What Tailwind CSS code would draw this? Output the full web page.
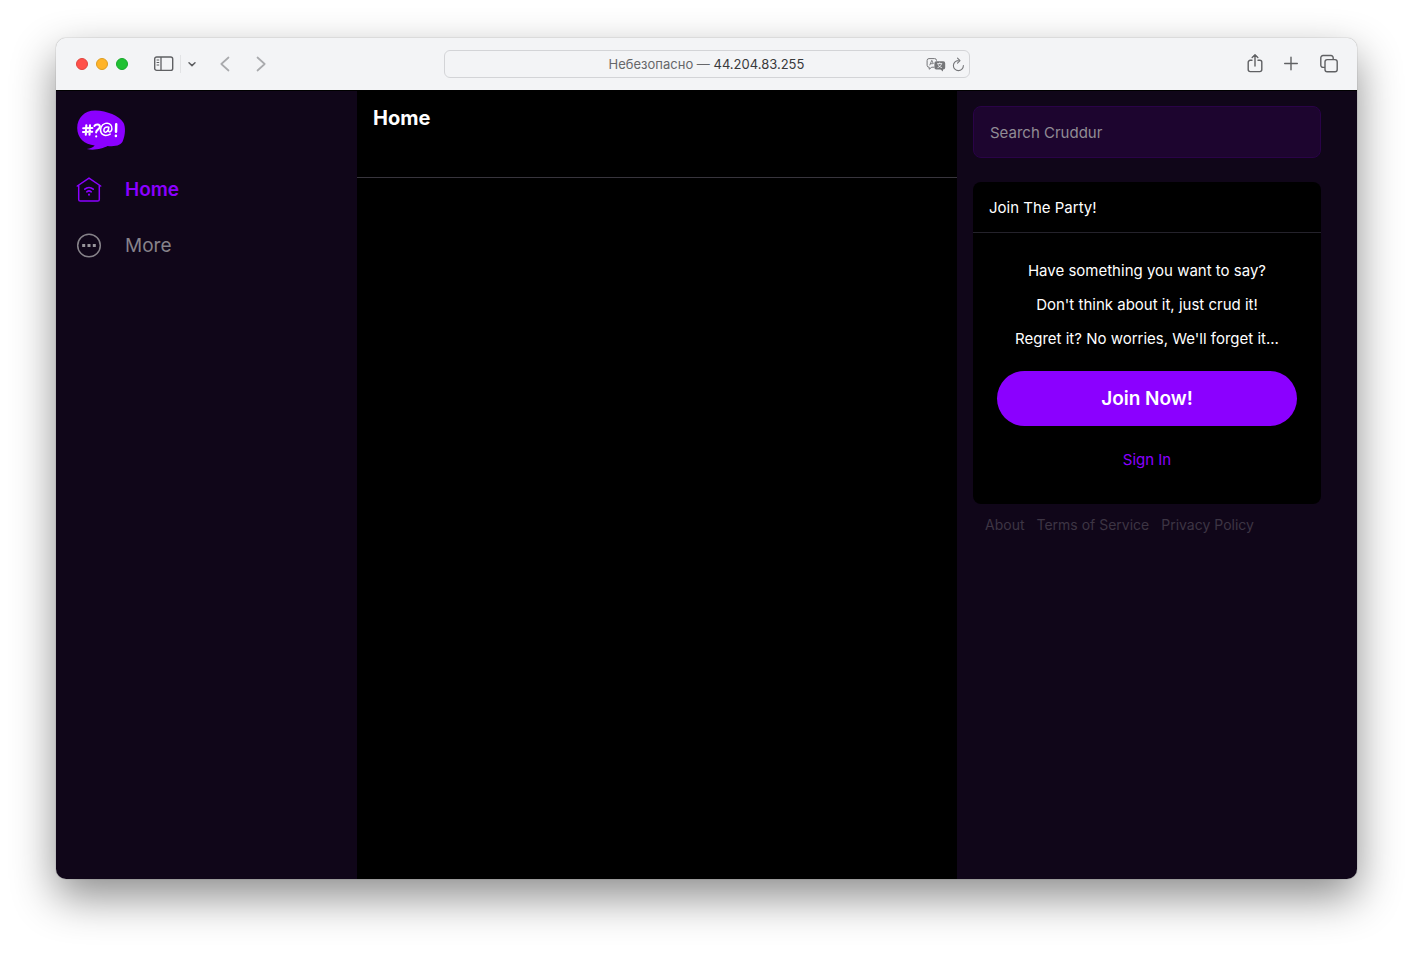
<!DOCTYPE html>
<html lang="en">
<head>
<meta charset="utf-8">
<title>Cruddur</title>
<script src="https://cdn.jsdelivr.net/npm/@tailwindcss/browser@4"></script>
</head>
<body class="bg-white font-['Inter','Liberation_Sans',sans-serif] text-white">
<div class="flex h-screen px-14 pt-[38px] pb-[74px]">
<div class="flex flex-1 flex-col overflow-hidden rounded-[10px] shadow-[0_18px_44px_rgba(0,0,0,0.45),0_0_1px_rgba(0,0,0,0.6)]">

  <header class="grid h-[52px] shrink-0 grid-cols-[1fr_526px_1fr] items-center bg-[#f3f4f6] text-[#5f6063]">
    <div class="flex items-center pl-5">
      <div class="flex gap-2">
        <button aria-label="Close" class="size-3 rounded-full border border-[#e0443e] bg-[#ff5049]"></button>
        <button aria-label="Minimize" class="size-3 rounded-full border border-[#dd9d20] bg-[#ffb429]"></button>
        <button aria-label="Zoom" class="size-3 rounded-full border border-[#17a82b] bg-[#20c133]"></button>
      </div>
      <button aria-label="Sidebar" class="ml-[25px]">
        <svg class="block" width="21" height="16" viewBox="0 0 21 16" fill="none" stroke="currentColor"><rect x="1.700" y="1" width="18" height="13.400" rx="2" stroke-width="1.4"/><path d="M8 1v13.400" stroke-width="1.3"/><path d="M3.600 4h2.600M3.600 6.500h2.600M3.600 9h2.600" stroke-width="1"/></svg>
      </button>
      <span class="ml-[6px] h-[18px] w-px bg-[#e2e3e5]"></span>
      <button aria-label="Tab groups" class="ml-[6px]">
        <svg class="block" width="10" height="8" viewBox="0 0 10 8" fill="none" stroke="currentColor" stroke-width="1.500" stroke-linecap="round" stroke-linejoin="round"><path d="M2 2.800 5 5.600l3-2.800"/></svg>
      </button>
      <button aria-label="Back" class="ml-[22px] text-[#a9aaad]">
        <svg class="block" width="12" height="16" viewBox="0 0 12 16" fill="none" stroke="currentColor" stroke-width="1.700" stroke-linecap="round" stroke-linejoin="round"><path d="M9.500 1.500 2.300 8l7.200 6.500"/></svg>
      </button>
      <button aria-label="Forward" class="ml-6 text-[#a9aaad]">
        <svg class="block" width="12" height="16" viewBox="0 0 12 16" fill="none" stroke="currentColor" stroke-width="1.700" stroke-linecap="round" stroke-linejoin="round"><path d="M2.500 1.500 9.700 8l-7.200 6.500"/></svg>
      </button>
    </div>

    <div class="relative flex h-7 items-center justify-center rounded-md border border-[#d3d4d7] pt-px text-[13px]">
      <span class="whitespace-pre text-[#66676a]">Небезопасно — <span class="text-[#38393b]">44.204.83.255</span></span>
      <div class="absolute right-1 flex items-center gap-1.5 text-[#757679]">
        <button aria-label="Translate">
          <svg class="block" width="20" height="16" viewBox="0 0 20 16" fill="none" stroke="currentColor"><path d="M8.300 10.200H5.800l-2.600 2v-2H3A1.900 1.900 0 0 1 1.100 8.300V3.500A1.900 1.900 0 0 1 3 1.600h5.600a1.900 1.900 0 0 1 1.900 1.900v.3"/><path d="m3.700 8.300 2.100-5 1.600 3.600M4.500 6.700h2.400" stroke-width=".9"/><path d="M10.300 4.300h7a1.900 1.900 0 0 1 1.900 1.900v4.400a1.900 1.900 0 0 1-1.900 1.900h-.3v2l-2.500-2h-4.200a1.900 1.900 0 0 1-1.900-1.900V6.200a1.900 1.900 0 0 1 1.900-1.900z" fill="currentColor" stroke="none"/><path d="M11.200 6.600h5M13.700 5.500v1M12 7.200c.6 1.600 2 2.800 3.800 3.400M15.400 7.200c-.6 1.600-2 2.800-3.800 3.400" stroke="#f3f4f6" stroke-width=".9"/></svg>
        </button>
        <button aria-label="Reload">
          <svg class="block" width="13" height="16" viewBox="0 0 13 16" fill="none" stroke="currentColor" stroke-width="1.100" stroke-linecap="round" stroke-linejoin="round"><path d="M6.300 3.600A5 5 0 1 0 11.400 8.600"/><path d="M5.500 1.100 8 3.700 5.500 6.200"/></svg>
        </button>
      </div>
    </div>

    <div class="flex items-center justify-end gap-5 pr-[18px]">
      <button aria-label="Share">
        <svg class="block" width="16" height="20" viewBox="0 0 16 20" fill="none" stroke="currentColor" stroke-width="1.400" stroke-linecap="round" stroke-linejoin="round"><path d="M5 6.300H3.200a2 2 0 0 0-2 2v7.300a2 2 0 0 0 2 2h9.600a2 2 0 0 0 2-2V8.300a2 2 0 0 0-2-2H11M8 12V1M5.200 3.500 8 .8l2.800 2.700"/></svg>
      </button>
      <button aria-label="New tab">
        <svg class="block" width="16" height="16" viewBox="0 0 16 16" fill="none" stroke="currentColor" stroke-width="1.400" stroke-linecap="round"><path d="M8 1.200v12.600M1.700 7.500h12.600"/></svg>
      </button>
      <button aria-label="Tab overview">
        <svg class="block" width="20" height="20" viewBox="0 0 20 20" fill="none" stroke="currentColor" stroke-width="1.400" stroke-linejoin="round"><rect x="6" y="5.600" width="12.200" height="12.200" rx="2.200"/><path d="M6 13.400H4a2.200 2.200 0 0 1-2.200-2.200V3.700A2.200 2.200 0 0 1 4 1.500h8a2.200 2.200 0 0 1 2.200 2.200v1.900"/></svg>
      </button>
    </div>
  </header>

  <div class="grid flex-1 grid-cols-[1fr_600px_400px] border-t border-black bg-[#100619]">
    <nav class="flex flex-col px-5 pt-[18px]">
      <a href="#" aria-label="Cruddur" class="w-fit">
        <svg class="block" width="50" height="42" viewBox="0 0 50 42" fill="none"><path d="M1.200 19C1.200 8.500 9 1.200 19.500 1.500 31 2 43 6.500 47.300 13.500c2.600 4.500 2 12.500-.3 18-1.600 4.800-7 6.300-15.500 5.500C27 39.500 18 41.800 10.800 40c3.800-.6 6.400-1.700 7.900-3.500C8.500 35.500 1.200 29 1.200 19z" fill="#8b00ff"/><g stroke="#fff" stroke-width="2.100" stroke-linecap="round" stroke-linejoin="round"><path d="m10.300 16.300-.5 9.500M14 16.300l-.5 9.500M7.200 19.300l9.200-.3M7 23l9.200-.3"/><path d="M18.400 17c1-2 5.500-2.200 5.500.7 0 2.500-3.600 2.800-3.800 5.700" stroke-width="2"/><path d="M20.200 27.200v.2"/><path d="M32.800 18.200c-3.500-1-5.200 1.300-4.900 3.500.3 2.400 3.200 2 4.300-.9l.6-2.200c-.6 2.600-.5 4.400.8 4.300 2.600-.3 3.200-5 1-7.200-2.700-2.800-8-1.600-9.600 2.700-1.500 4.200.5 8 4.700 8 1.800 0 3.300-.5 4.500-1.300" stroke-width="1.500"/><path d="m40.200 15.300-.2 7.400M39.900 26.700v.2" stroke-width="2.500"/></g></svg>
      </a>
      <a href="#" class="mt-[23px] flex h-8 items-center gap-[23px] text-[19px] font-semibold text-[#8b00ff]">
        <svg width="26" height="26" viewBox="0 0 26 26" fill="none" stroke="currentColor" stroke-width="1.500" stroke-linecap="round" stroke-linejoin="round"><path d="M1.300 9 13 1.100 24.700 9M2.700 8.300v14.100c0 1 .6 1.700 1.600 1.700h17.400c1 0 1.600-.7 1.600-1.700V8.300"/><path d="M8.800 12.200c2.400-2 6-2 8.400 0M10.800 14.800c1.300-1 3.100-1 4.400 0" stroke-width="1.700"/><path d="M13 17.400v.3" stroke-width="2"/></svg>
        Home
      </a>
      <a href="#" class="mt-6 flex h-8 items-center gap-[23px] text-[19px] text-[#86828a]">
        <svg width="26" height="26" viewBox="0 0 26 26" fill="none" stroke="#868289"><circle cx="13" cy="12.500" r="11.300" stroke-width="1.500"/><path d="M6.200 11h3v3h-3zM11.500 11h3v3h-3zM16.800 11h3v3h-3z" fill="#98959b" stroke="none"/></svg>
        More
      </a>
    </nav>

    <main class="bg-black">
      <div class="h-[87px] border-b border-[#38353d] px-4 pt-[11px]">
        <h1 class="text-xl leading-8 font-bold">Home</h1>
      </div>
    </main>

    <aside class="pt-[15px] pr-9 pl-4">
      <input type="text" aria-label="Search Cruddur" placeholder="Search Cruddur" class="block h-[52px] w-full rounded-lg border border-[#2a0348] bg-[#1d052f] px-4 text-[15px] text-white placeholder:text-[#918c95]">
      <section class="mt-6 rounded-lg bg-black pb-6 text-[15px]">
        <h2 class="border-b border-[#24222b] px-4 pt-3.5 pb-3 leading-6">Join The Party!</h2>
        <div class="flex flex-col items-center gap-2.5 px-6 pt-[26px]">
          <p class="leading-6">Have something you want to say?</p>
          <p class="leading-6">Don't think about it, just crud it!</p>
          <p class="leading-6">Regret it? No worries, We'll forget it...</p>
          <button class="mt-2.5 h-[55px] w-full rounded-full bg-[#8b00ff] pt-0.5 text-[19px] font-semibold">Join Now!</button>
          <a href="#" class="mt-3 mb-2 leading-6 text-[#8b00ff]">Sign In</a>
        </div>
      </section>
      <footer class="flex gap-3 px-3 pt-[11px] text-sm text-[#3d3544]">
        <a href="#">About</a>
        <a href="#">Terms of Service</a>
        <a href="#">Privacy Policy</a>
      </footer>
    </aside>
  </div>
</div>
</div>
</body>
</html>
